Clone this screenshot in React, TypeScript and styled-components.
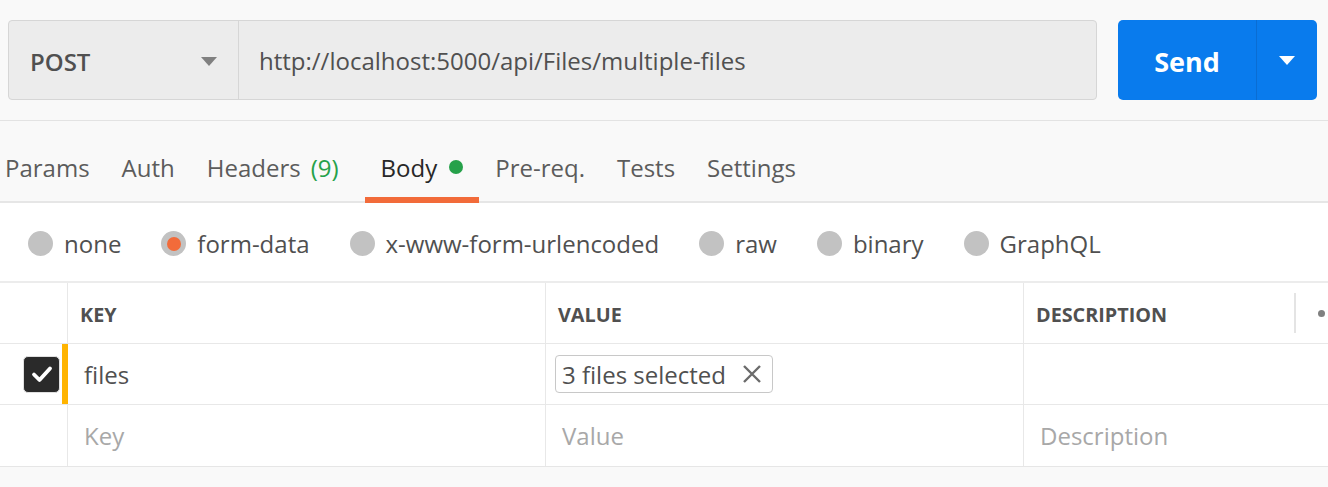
import React from "react";
import styled, { createGlobalStyle } from "styled-components";

const GlobalStyle = createGlobalStyle`
  html, body {
    margin: 0;
    padding: 0;
    background: #f9f9f9;
    font-family: "Open Sans", "Liberation Sans", sans-serif;
    color: #505050;
  }
  * { box-sizing: border-box; }
`;

const tabs = [
  { label: "Params" },
  { label: "Auth" },
  { label: "Headers", count: 9 },
  { label: "Body", dot: true, active: true },
  { label: "Pre-req." },
  { label: "Tests" },
  { label: "Settings" },
];

const bodyTypes = ["none", "form-data", "x-www-form-urlencoded", "raw", "binary", "GraphQL"];

const App = () => {
  return (
    <>
      <GlobalStyle />
      <Page>
        <TopBar>
          <RequestBox>
            <MethodSelect>
              <span>POST</span>
              <Caret color="#808080" />
            </MethodSelect>
            <UrlField>http://localhost:5000/api/Files/multiple-files</UrlField>
          </RequestBox>
          <SendGroup>
            <SendButton>Send</SendButton>
            <SendMenu>
              <Caret color="#ffffff" />
            </SendMenu>
          </SendGroup>
        </TopBar>

        <TabBar>
          {tabs.map((t) => (
            <Tab key={t.label} active={t.active}>
              {t.label}
              {t.count !== undefined && <Count>({t.count})</Count>}
              {t.dot && <GreenDot />}
            </Tab>
          ))}
        </TabBar>

        <BodyPanel>
          <RadioRow>
            {bodyTypes.map((b) => (
              <RadioItem key={b}>
                <Radio selected={b === "form-data"} />
                {b}
              </RadioItem>
            ))}
          </RadioRow>

          <Table>
            <Row>
              <CheckCell />
              <HeadCell>KEY</HeadCell>
              <HeadCell>VALUE</HeadCell>
              <HeadCell last>
                DESCRIPTION
                <HeadTools>
                  <Resizer />
                  <MoreDot />
                </HeadTools>
              </HeadCell>
            </Row>
            <Row>
              <CheckCell marked>
                <CheckBox>
                  <svg width="26" height="26" viewBox="0 0 26 26">
                    <path d="M5 13.5 L10.5 19 L21 7.5" fill="none" stroke="#fff" strokeWidth="3.8" strokeLinecap="round" strokeLinejoin="round" />
                  </svg>
                </CheckBox>
              </CheckCell>
              <Cell>files</Cell>
              <Cell>
                <FileChip>
                  3 files selected
                  <svg width="20" height="20" viewBox="0 0 20 20">
                    <path d="M2 2 L18 18 M18 2 L2 18" stroke="#6b6b6b" strokeWidth="2.4" />
                  </svg>
                </FileChip>
              </Cell>
              <Cell last />
            </Row>
            <Row>
              <CheckCell />
              <Cell placeholder>Key</Cell>
              <Cell placeholder>Value</Cell>
              <Cell placeholder last>Description</Cell>
            </Row>
          </Table>
        </BodyPanel>
      </Page>
    </>
  );
};

const Page = styled.div`
  width: 1328px;
  min-height: 487px;
  overflow: hidden;
`;

const TopBar = styled.div`
  display: flex;
  align-items: center;
  gap: 21px;
  height: 121px;
  padding: 0 11px 0 8px;
  border-bottom: 1px solid #e3e3e3;
`;

const RequestBox = styled.div`
  flex: 1;
  display: flex;
  height: 80px;
  background: #ececec;
  border: 1px solid #d6d6d6;
  border-radius: 4px;
`;

const MethodSelect = styled.div`
  width: 230px;
  display: flex;
  align-items: center;
  justify-content: space-between;
  padding: 2px 21px 0 21px;
  border-right: 1px solid #d6d6d6;
  font-size: 24px;
  font-weight: 600;
  color: #505050;
`;

const UrlField = styled.div`
  flex: 1;
  display: flex;
  align-items: center;
  padding-left: 20px;
  font-size: 24px;
  color: #505050;
`;

const Caret = styled.span<{ color: string }>`
  width: 0;
  height: 0;
  border-left: 8px solid transparent;
  border-right: 8px solid transparent;
  border-top: 9px solid ${(p) => p.color};
`;

const SendGroup = styled.div`
  display: flex;
  width: 199px;
  height: 80px;
  background: #097bed;
  border-radius: 5px;
`;

const SendButton = styled.div`
  width: 139px;
  display: flex;
  align-items: center;
  justify-content: center;
  padding-top: 2px;
  font-size: 27px;
  font-weight: 700;
  color: #ffffff;
  border-right: 1px solid #0a6dd3;
`;

const SendMenu = styled.div`
  flex: 1;
  display: flex;
  align-items: center;
  justify-content: center;
`;

const TabBar = styled.div`
  display: flex;
  height: 82px;
  padding-left: 5px;
  border-bottom: 2px solid #e6e6e6;
`;

const Tab = styled.div<{ active?: boolean }>`
  position: relative;
  display: flex;
  align-items: center;
  padding: 12px 16px 0;
  font-size: 24px;
  color: ${(p) => (p.active ? "#282828" : "#5c5c5c")};

  &:first-child {
    padding-left: 0;
  }

  ${(p) =>
    p.active &&
    `
    &::after {
      content: "";
      position: absolute;
      left: 0;
      right: 0;
      bottom: -2px;
      height: 6px;
      background: #f26b3a;
    }
  `}
`;

const Count = styled.span`
  margin-left: 10px;
  margin-right: 10px;
  color: #26a14a;
`;

const GreenDot = styled.span`
  width: 14px;
  height: 14px;
  margin-left: 12px;
  border-radius: 50%;
  background: #26a14a;
`;

const BodyPanel = styled.div`
  background: #ffffff;
  border-bottom: 1px solid #e6e6e6;
`;

const RadioRow = styled.div`
  display: flex;
  align-items: center;
  gap: 40px;
  height: 80px;
  padding: 3px 0 0 28px;
  border-bottom: 2px solid #ececec;
`;

const RadioItem = styled.div`
  display: flex;
  align-items: center;
  gap: 11px;
  font-size: 24px;
  color: #505050;
`;

const Radio = styled.span<{ selected?: boolean }>`
  width: 25px;
  height: 25px;
  border-radius: 50%;
  background: #c2c2c2;
  display: flex;
  align-items: center;
  justify-content: center;

  ${(p) =>
    p.selected &&
    `
    &::after {
      content: "";
      width: 14px;
      height: 14px;
      border-radius: 50%;
      background: #f26b3a;
    }
  `}
`;

const Table = styled.div`
  display: flex;
  flex-direction: column;
`;

const Row = styled.div`
  display: grid;
  grid-template-columns: 68px 478px 478px 1fr;
  height: 61px;
  border-bottom: 1px solid #e8e8e8;

  &:last-child {
    border-bottom: none;
  }
`;

const CheckCell = styled.div<{ marked?: boolean }>`
  display: flex;
  align-items: center;
  justify-content: flex-end;
  padding-right: 8px;
  border-right: ${(p) => (p.marked ? "6px solid #ffb400" : "1px solid #e8e8e8")};
`;

const CheckBox = styled.span`
  width: 37px;
  height: 37px;
  margin-right: -6px;
  border-radius: 5px;
  background: #2a2a2a;
  border: 1px solid #e0e0e0;
  display: flex;
  align-items: center;
  justify-content: center;
`;

const HeadCell = styled.div<{ last?: boolean }>`
  position: relative;
  display: flex;
  align-items: center;
  padding: 2px 0 0 12px;
  font-size: 19.8px;
  font-weight: 700;
  color: #505050;
  border-right: ${(p) => (p.last ? "none" : "1px solid #e8e8e8")};
`;

const HeadTools = styled.div`
  position: absolute;
  left: 270px;
  top: 10px;
  bottom: 10px;
  display: flex;
  align-items: center;
  gap: 22px;
`;

const Resizer = styled.span`
  width: 2px;
  height: 100%;
  background: #e4e4e4;
`;

const MoreDot = styled.span`
  width: 7px;
  height: 7px;
  border-radius: 50%;
  background: #808080;
`;

const Cell = styled.div<{ last?: boolean; placeholder?: boolean }>`
  display: flex;
  align-items: center;
  padding-left: 16px;
  font-size: 24px;
  color: ${(p) => (p.placeholder ? "#a8a8a8" : "#505050")};
  border-right: ${(p) => (p.last ? "none" : "1px solid #e8e8e8")};
`;

const FileChip = styled.div`
  display: flex;
  align-items: center;
  gap: 16px;
  height: 38px;
  margin-left: -7px;
  padding: 0 10px 0 6px;
  border: 1px solid #c8c8c8;
  border-radius: 4px;
  font-size: 24px;
  color: #505050;
`;

export default App;
